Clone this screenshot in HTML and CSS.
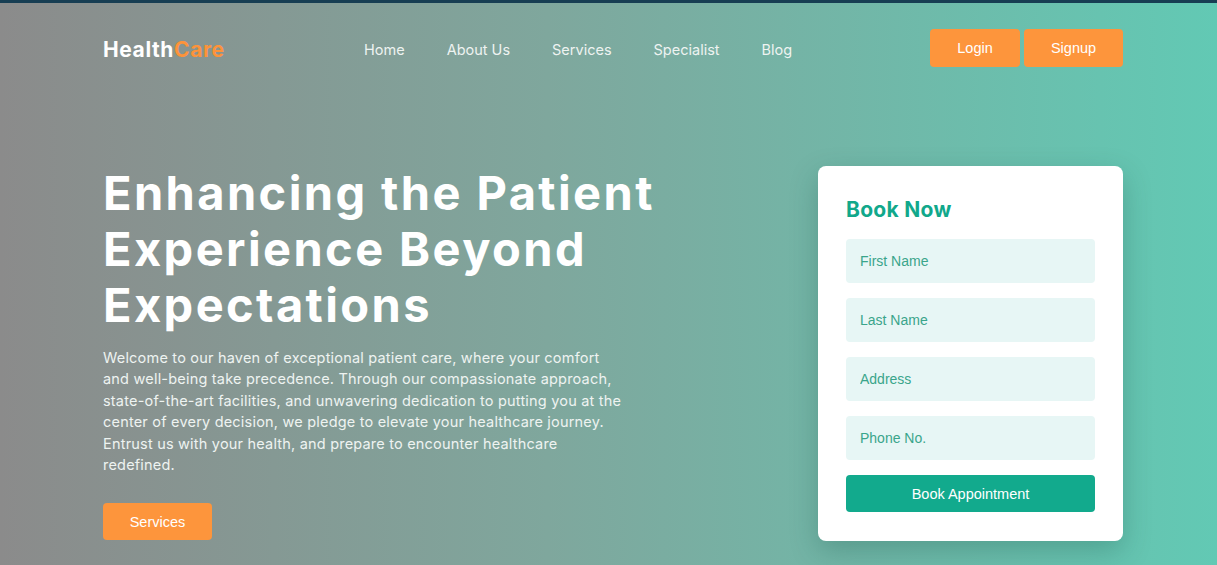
FILE: index.html
```html
<!DOCTYPE html>
<html lang="en">
<head>
<meta charset="utf-8">
<title>HealthCare</title>
<link rel="stylesheet" href="styles.css">
</head>
<body>
<div class="page">
  <header class="header">
    <div class="logo">Health<span class="logo-accent">Care</span></div>
    <nav class="nav">
      <a href="#">Home</a>
      <a href="#">About Us</a>
      <a href="#">Services</a>
      <a href="#">Specialist</a>
      <a href="#">Blog</a>
    </nav>
    <div class="auth">
      <button class="btn btn-orange btn-login">Login</button>
      <button class="btn btn-orange btn-signup">Signup</button>
    </div>
  </header>
  <main class="hero">
    <section class="hero-text">
      <h1 class="hero-title">Enhancing the Patient Experience Beyond Expectations</h1>
      <p class="hero-desc">Welcome to our haven of exceptional patient care, where your comfort and well-being take precedence. Through our compassionate approach, state-of-the-art facilities, and unwavering dedication to putting you at the center of every decision, we pledge to elevate your healthcare journey. Entrust us with your health, and prepare to encounter healthcare redefined.</p>
      <button class="btn btn-orange btn-services">Services</button>
    </section>
    <form class="card">
      <h2 class="card-title">Book Now</h2>
      <input class="field" type="text" placeholder="First Name">
      <input class="field" type="text" placeholder="Last Name">
      <input class="field" type="text" placeholder="Address">
      <input class="field" type="text" placeholder="Phone No.">
      <button class="btn-book" type="button">Book Appointment</button>
    </form>
  </main>
</div>
</body>
</html>
```
FILE: styles.css
```css
* { box-sizing: border-box; }
html, body { margin: 0; padding: 0; }
body {
  font-family: Inter, "Noto Sans", sans-serif;
  overflow: hidden;
}
.page {
  height: 565px;
  border-top: 3px solid #173e53;
  background: linear-gradient(90deg, #8b8b8b 0%, #7fa79d 45%, #62c9b4 100%);
  padding: 0 94px 0 103px;
}
.header {
  display: flex;
  align-items: flex-start;
  padding-top: 26px;
  height: 67px;
}
.logo {
  font-weight: 700;
  font-size: 21px;
  color: #ffffff;
  width: 261px;
  line-height: 38px;
  padding-top: 2px;
  letter-spacing: 0.6px;
}
.logo-accent { color: #fd933a; }
.nav {
  display: flex;
  gap: 42px;
  line-height: 38px;
  padding-top: 2px;
  flex: 1;
}
.nav a {
  color: #eef3f1;
  text-decoration: none;
  font-size: 14.5px;
}
.auth { display: flex; gap: 4px; }
.btn {
  border: none;
  border-radius: 4px;
  font-family: "Liberation Sans", Arial, sans-serif;
  font-size: 14.5px;
  color: #fff;
  cursor: pointer;
}
.btn-orange { background: #fd953c; }
.btn-login { width: 90px; height: 38px; }
.btn-signup { width: 99px; height: 38px; }
.hero {
  display: flex;
  justify-content: space-between;
  align-items: flex-start;
  margin-top: 95px;
}
.hero-text { width: 600px; }
.hero-title {
  margin: 0;
  font-size: 47px;
  line-height: 56px;
  font-weight: 700;
  color: #fff;
  letter-spacing: 2.4px;
}
.hero-desc {
  margin: 14px 0 0;
  width: 524px;
  font-size: 14.5px;
  line-height: 21.4px;
  color: #eef3f1;
  letter-spacing: 0.2px;
}
.btn-services {
  margin-top: 28px;
  width: 109px;
  height: 37px;
}
.card {
  width: 305px;
  background: #fff;
  border-radius: 8px;
  padding: 28px 28px 29px;
  box-shadow: 0 10px 28px rgba(20, 80, 70, 0.28);
  display: flex;
  flex-direction: column;
  gap: 15px;
  margin-top: 1px;
}
.card-title {
  margin: 2px 0 0;
  font-size: 21px;
  line-height: 28px;
  font-weight: 700;
  color: #11a88b;
  letter-spacing: 0.3px;
}
.field {
  height: 44px;
  border: none;
  border-radius: 4px;
  background: #e7f6f5;
  padding: 0 14px;
  font-family: "Liberation Sans", Arial, sans-serif;
  font-size: 14px;
  color: #2f9f85;
  outline: none;
}
.field::placeholder { color: #3aa58b; }
.btn-book {
  height: 37px;
  border: none;
  border-radius: 4px;
  background: #12aa8d;
  color: #fff;
  font-family: "Liberation Sans", Arial, sans-serif;
  font-size: 14.5px;
  cursor: pointer;
}
```
